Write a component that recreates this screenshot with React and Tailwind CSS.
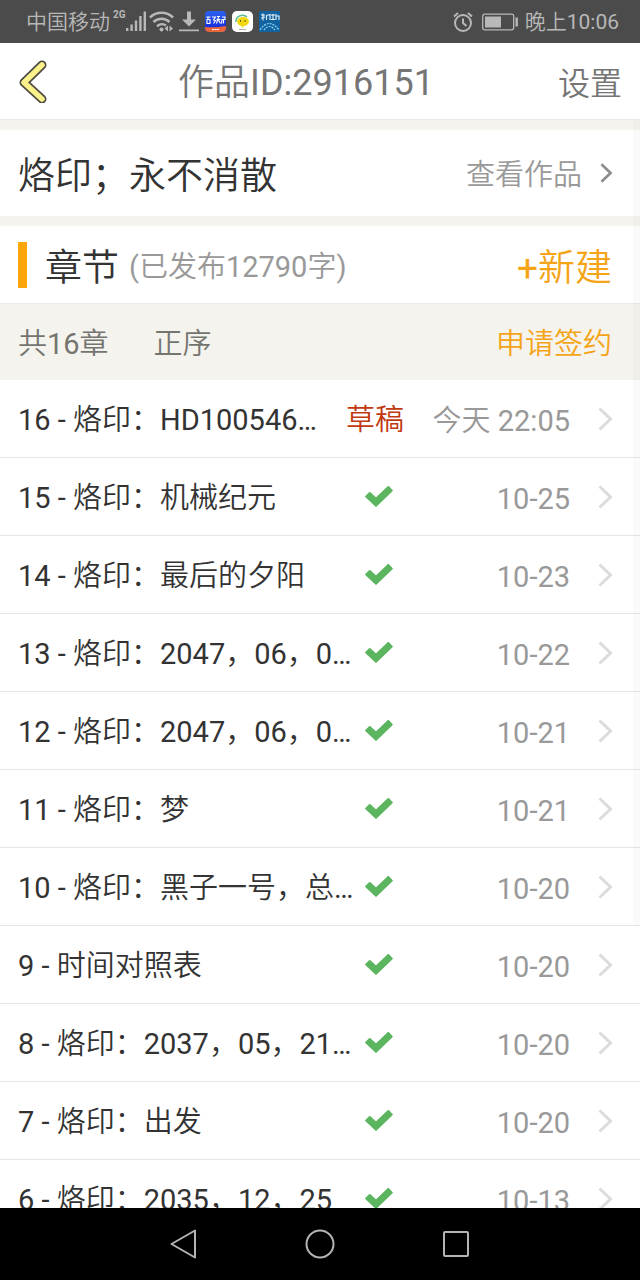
const chapters = [
  { title: "16 - 烙印：HD100546…", date: "今天 22:05", draft: true },
  { title: "15 - 烙印：机械纪元", date: "10-25" },
  { title: "14 - 烙印：最后的夕阳", date: "10-23" },
  { title: "13 - 烙印：2047，06，0…", date: "10-22" },
  { title: "12 - 烙印：2047，06，0…", date: "10-21" },
  { title: "11 - 烙印：梦", date: "10-21" },
  { title: "10 - 烙印：黑子一号，总…", date: "10-20" },
  { title: "9 - 时间对照表", date: "10-20" },
  { title: "8 - 烙印：2037，05，21…", date: "10-20" },
  { title: "7 - 烙印：出发", date: "10-20" },
  { title: "6 - 烙印：2035，12，25", date: "10-13" },
];

function SignalIcon() {
  return (
    <svg className="h-6 w-5" viewBox="0 0 20 24" fill="currentColor">
      <rect x="0" y="18" width="2.4" height="3" />
      <rect x="4.4" y="14.5" width="2.4" height="6.5" />
      <rect x="8.8" y="10.5" width="2.4" height="10.5" />
      <rect x="13.2" y="6" width="2.4" height="15" />
      <rect x="17.6" y="1.5" width="2.4" height="19.5" />
    </svg>
  );
}

function WifiIcon() {
  return (
    <svg className="ml-[3px] h-6 w-[25px]" viewBox="0 0 25 24" fill="none" stroke="currentColor" strokeWidth="2.5">
      <path d="M1 7.5a16.5 16.5 0 0 1 23 0M4.500 12a11.500 11.500 0 0 1 16 0M8 16.300a7 7 0 0 1 9-.800" />
      <circle cx="12.5" cy="19.5" r="2" fill="currentColor" stroke="none" />
      <path d="M19 15.500v6l-3.500-3zM20.500 15.500v6l3.500-3z" fill="currentColor" stroke="none" />
    </svg>
  );
}

function DownloadIcon() {
  return (
    <svg className="ml-[5px] h-6 w-5" viewBox="0 0 20 24" fill="currentColor">
      <path d="M8 1.500h4v8h5l-7 7-7-7h5zM0 19.500h20v1.800H0z" />
    </svg>
  );
}

function NotificationIcons() {
  return (
    <div className="ml-[6px] flex gap-[6px]">
      <svg className="size-[21px]" viewBox="0 0 21 21">
        <defs>
          <linearGradient id="blue" x1="0" y1="0" x2="0" y2="1">
            <stop offset="0" stopColor="#2a62ee" />
            <stop offset="1" stopColor="#1320d8" />
          </linearGradient>
          <clipPath id="tile">
            <rect width="21" height="21" rx="4" />
          </clipPath>
        </defs>
        <g clipPath="url(#tile)">
          <rect width="21" height="21" fill="url(#blue)" />
          <path d="M0 16q10 1 21-1v6H0z" fill="#e8663c" />
          <path d="M1.500 6h4M2 8.500h3v4H2zM3 6v3M7 6h3.500l-2 3 2 .5-2 3M12 5.500h3M11.500 8.500h4M13.500 6l-2 6.500M13.500 9l2 3.500M17 6h3v2.500h-3l-.5 4M18.500 9v3.500" fill="none" stroke="#fff" strokeWidth="1.1" />
          <path d="M7 18.500h7" stroke="#fff" strokeWidth="1.2" strokeDasharray="2 .6" />
        </g>
      </svg>
      <svg className="size-[21px]" viewBox="0 0 21 21">
        <rect width="21" height="21" rx="5" fill="#fff" />
        <path d="M4 11a6.500 6 0 0 1 11-5" fill="none" stroke="#58b98b" strokeWidth="1.5" />
        <ellipse cx="11" cy="10.5" rx="6" ry="4.5" fill="#f3d70f" />
        <path d="M9 13l1 4 3-3z" fill="#f3d70f" />
        <path d="M8.500 9v2M13 9v2" stroke="#6d6210" />
        <path d="M7 18.500h7" stroke="#999" strokeWidth=".8" />
      </svg>
      <svg className="size-[21px]" viewBox="0 0 21 21">
        <rect width="21" height="21" rx="1" fill="#1263a0" />
        <path d="M2 4h4M4 2.500v7M2 7l4-1M7.500 4v5M8 4h3M11 3v6M12 4h4M12 8.500h4M14 3v5M17 3v6M17 5h3v4" fill="none" stroke="#e8f6ff" strokeWidth="1.1" />
        <path d="M1 19q9-13 19 0M5 19q5-7 11 0" fill="none" stroke="#8fd8f5" strokeWidth="1.2" strokeDasharray="2 1" />
      </svg>
    </div>
  );
}

function StatusBar() {
  return (
    <div className="flex h-[43px] shrink-0 items-center justify-between bg-[#4b4b4b] pr-[21px] pl-[26px] text-[21px] text-[#b8b8b8]">
      <div className="flex items-center">
        <span className="pt-[2px]">中国移动</span>
        <span className="ml-[3px] self-start pt-[2px] text-[10px] leading-4 font-bold">2G</span>
        <SignalIcon />
        <WifiIcon />
        <DownloadIcon />
        <NotificationIcons />
      </div>
      <div className="flex items-center">
        <svg className="h-5 w-5" viewBox="0 0 20 20" fill="none" stroke="currentColor" strokeWidth="2">
          <circle cx="10" cy="11" r="8" />
          <path d="M10 6.500V11l3.500 3M1 4.500L5 1M19 4.500L15 1" />
        </svg>
        <svg className="mr-[7px] ml-[9px] h-[18px] w-9" viewBox="0 0 36 18" fill="none" stroke="currentColor">
          <rect x=".7" y="1.2" width="31" height="15.6" rx="2" strokeWidth="1.3" />
          <rect x="3" y="3.5" width="16" height="11" fill="currentColor" stroke="none" />
          <path d="M34.700 4.500v9" strokeWidth="2.4" />
        </svg>
        <span className="pt-[2px]">晚上10:06</span>
      </div>
    </div>
  );
}

function Chevron({ className }) {
  return (
    <svg className={className} viewBox="0 0 14 24" fill="none" stroke="currentColor">
      <path d="M1.500 1.500L12.500 12 1.500 22.500" />
    </svg>
  );
}

function Check({ className }) {
  return (
    <svg className={className} viewBox="0 0 28 21" fill="currentColor" stroke="currentColor" strokeWidth="2" strokeLinejoin="round">
      <path d="M1.200 10.500L4.800 7l6.200 5.800L23.300 1l3.500 3.600L11 19.800z" />
    </svg>
  );
}

function Header() {
  return (
    <header className="flex h-[77px] shrink-0 items-center justify-between border-b border-[#e9e9e6] bg-white px-[18px] text-[#757575]">
      <button aria-label="返回" className="w-9">
        <svg className="h-11 w-[30px]" viewBox="0 0 30 44" fill="none" strokeLinecap="round" strokeLinejoin="round">
          <path d="M24 6L6 23.500 24 40" stroke="#4f4b40" strokeWidth="9" />
          <path d="M24 6L6 23.500 24 40" stroke="#fbf28c" strokeWidth="5.5" />
        </svg>
      </button>
      <h1 className="pt-1 text-[36px]">作品ID:2916151</h1>
      <button className="pt-[6px] text-[32px]">设置</button>
    </header>
  );
}

function ChapterRow({ title, date, draft }) {
  return (
    <li className="border-b border-[#e6e6e6]">
      <a href="#chapter" className="flex h-[77px] items-center pr-7 pl-[18px] text-[29px]">
        <span className="flex min-w-0 flex-1 items-center">
          <span className="min-w-0 flex-1 truncate pt-1 text-[#333]">{title}</span>
          {draft ? (
            <span className="shrink-0 pt-1 text-[#c1390f]">草稿</span>
          ) : (
            <Check className="mr-[11px] ml-[10px] h-[21px] w-7 shrink-0 text-[#5cb55f]" />
          )}
        </span>
        <span className="w-[166px] shrink-0 pt-[6px] text-right text-[#999]">{date}</span>
        <Chevron className="ml-7 h-6 w-[14px] shrink-0 stroke-3 text-[#dcdcdc]" />
      </a>
    </li>
  );
}

function NavBar() {
  return (
    <nav className="flex h-[72px] shrink-0 items-center justify-center gap-20 bg-black text-[#b4b4b4]">
      <button aria-label="后退" className="flex w-14 justify-center">
        <svg className="size-8" viewBox="0 0 32 32" fill="none" stroke="currentColor" strokeWidth="2" strokeLinejoin="round">
          <path d="M27 2.500v27L3.500 16z" />
        </svg>
      </button>
      <button aria-label="主页" className="flex w-14 justify-center">
        <svg className="size-8" viewBox="0 0 32 32" fill="none" stroke="currentColor" strokeWidth="2">
          <circle cx="16" cy="16" r="13.5" />
        </svg>
      </button>
      <button aria-label="最近任务" className="flex w-14 justify-center">
        <svg className="size-8" viewBox="0 0 32 32" fill="none" stroke="currentColor" strokeWidth="2">
          <rect x="4" y="4" width="24" height="24" rx="1" />
        </svg>
      </button>
    </nav>
  );
}

export default function App() {
  return (
    <div className="flex h-screen flex-col overflow-hidden bg-[#f4f3ee] font-['Roboto','Noto_Sans_CJK_SC_DemiLight','Noto_Sans_CJK_SC',sans-serif]">
      <StatusBar />
      <Header />
      <main className="relative flex min-h-0 flex-1 flex-col gap-[10px] overflow-hidden pt-[10px]">
        <section className="flex h-[86px] shrink-0 items-center justify-between bg-white pr-7 pl-[18px]">
          <h2 className="pt-2 text-[37px] text-[#333]">烙印；永不消散</h2>
          <a href="#work" className="flex items-center text-[29px] text-[#999]">
            <span className="pt-[6px]">查看作品</span>
            <Chevron className="ml-[18px] h-5 w-3 stroke-3 text-[#8c8c8c]" />
          </a>
        </section>
        <section className="bg-white">
          <div className="flex h-[77px] items-center pr-7 pl-[18px]">
            <span className="h-[46px] w-[9px] bg-[#fba60a]" />
            <h2 className="ml-[18px] pt-2 text-[37px] text-[#333]">章节</h2>
            <span className="ml-[10px] pt-[6px] text-[29px] text-[#999]">(已发布12790字)</span>
            <button className="ml-auto pt-2 text-[37px] text-[#f5a417]">+新建</button>
          </div>
          <div className="flex h-[77px] items-center border-t border-[#ebebe7] bg-[#f4f3ee] pt-[6px] pr-7 pl-[18px] text-[29px] text-[#757570]">
            <span>共16章</span>
            <button className="ml-[45px]">正序</button>
            <button className="ml-auto text-[#f5a417]">申请签约</button>
          </div>
          <ul>
            {chapters.map((chapter) => (
              <ChapterRow key={chapter.title} {...chapter} />
            ))}
          </ul>
        </section>
        {/* scroll thumb */}
        <div className="absolute top-0 right-0 h-[806px] w-[7px] bg-black/[.02]" />
      </main>
      <NavBar />
    </div>
  );
}
